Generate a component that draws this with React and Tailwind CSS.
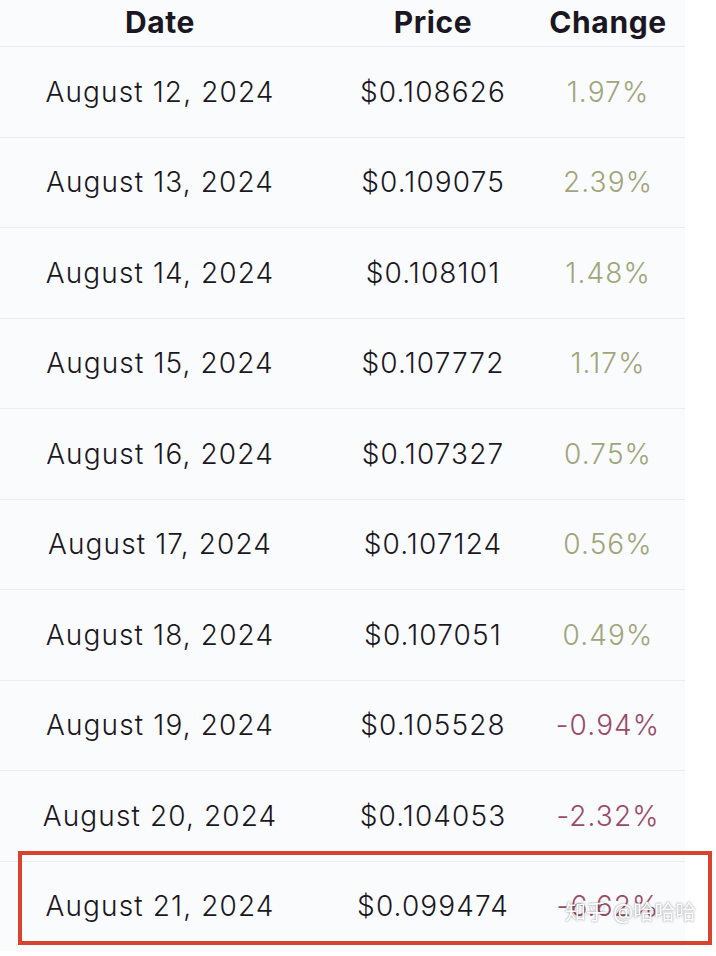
const rows = [
  ["August 12, 2024", "$0.108626", "1.97%"],
  ["August 13, 2024", "$0.109075", "2.39%"],
  ["August 14, 2024", "$0.108101", "1.48%"],
  ["August 15, 2024", "$0.107772", "1.17%"],
  ["August 16, 2024", "$0.107327", "0.75%"],
  ["August 17, 2024", "$0.107124", "0.56%"],
  ["August 18, 2024", "$0.107051", "0.49%"],
  ["August 19, 2024", "$0.105528", "-0.94%"],
  ["August 20, 2024", "$0.104053", "-2.32%"],
  ["August 21, 2024", "$0.099474", "-6.62%"],
];

export default function App() {
  return (
    <div
      className="relative w-[716px] h-[956px] overflow-hidden bg-white text-[#1b1722]"
      style={{ fontFamily: "Inter, 'Noto Sans CJK SC', sans-serif" }}
    >
      <div className="w-[685px] bg-[#fafbfd]">
        <div className="grid grid-cols-[320px_226px_124px] h-[46px] items-center pb-[2px] text-[30px] font-bold tracking-[0.02em]">
          <div className="text-center">Date</div>
          <div className="text-center">Price</div>
          <div className="text-center">Change</div>
        </div>
        {rows.map(([date, price, change]) => (
          <div
            key={date}
            className="grid grid-cols-[320px_226px_124px] h-[90.5px] items-center border-t border-[#ebecef] text-[28px] font-light tracking-[0.04em]"
          >
            <div className="text-center">{date}</div>
            <div className="text-center">{price}</div>
            <div
              className={
                change.startsWith("-")
                  ? "text-center text-[#9b4a68]"
                  : "text-center text-[#a0a57a]"
              }
            >
              {change}
            </div>
          </div>
        ))}
      </div>

      <div className="absolute left-[18px] top-[851px] w-[694px] h-[94px] border-4 border-[#d8432d]" />

      <div className="absolute left-[565px] top-[896px] text-[21px] text-white [text-shadow:0_0_2px_rgba(0,0,0,0.5)]">
        知乎 @哈哈哈
      </div>
    </div>
  );
}
